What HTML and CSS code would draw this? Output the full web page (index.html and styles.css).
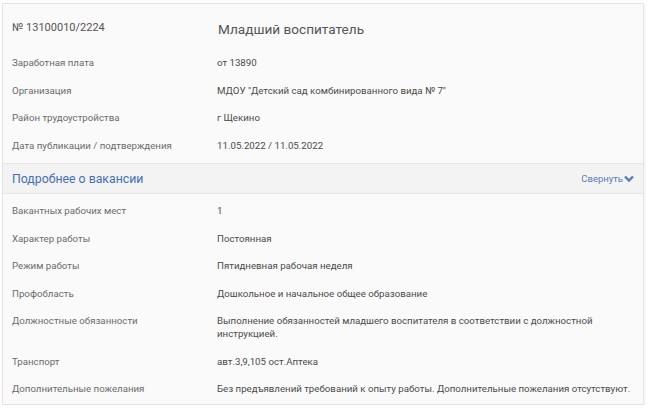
FILE: index.html
```html
<!DOCTYPE html>
<html lang="ru">
<head>
<meta charset="utf-8">
<link rel="stylesheet" href="styles.css">
</head>
<body>
<div class="panel">
  <div class="head">
    <div class="num">№ 13100010/2224</div>
    <div class="title">Младший воспитатель</div>
  </div>
  <div class="rows">
    <div class="row"><div class="lbl">Заработная плата</div><div class="val">от 13890</div></div>
    <div class="row"><div class="lbl">Организация</div><div class="val">МДОУ "Детский сад комбинированного вида № 7"</div></div>
    <div class="row"><div class="lbl">Район трудоустройства</div><div class="val">г Щекино</div></div>
    <div class="row"><div class="lbl">Дата публикации / подтверждения</div><div class="val">11.05.2022 / 11.05.2022</div></div>
  </div>
  <div class="section">
    <div class="section-title">Подробнее о вакансии</div>
    <div class="toggle">Свернуть<svg class="chev" viewBox="0 0 10 8" width="10" height="8"><path d="M1 1.5 L5 5.5 L9 1.5" fill="none" stroke="currentColor" stroke-width="2.4" stroke-linejoin="miter"/></svg></div>
  </div>
  <div class="rows rows-detail">
    <div class="row"><div class="lbl">Вакантных рабочих мест</div><div class="val">1</div></div>
    <div class="row"><div class="lbl">Характер работы</div><div class="val">Постоянная</div></div>
    <div class="row"><div class="lbl">Режим работы</div><div class="val">Пятидневная рабочая неделя</div></div>
    <div class="row"><div class="lbl">Профобласть</div><div class="val">Дошкольное и начальное общее образование</div></div>
    <div class="row"><div class="lbl">Должностные обязанности</div><div class="val">Выполнение обязанностей младшего воспитателя в соответствии с должностной инструкцией.</div></div>
    <div class="row"><div class="lbl">Транспорт</div><div class="val">авт.3,9,105 ост.Аптека</div></div>
    <div class="row"><div class="lbl">Дополнительные пожелания</div><div class="val">Без предъявлений требований к опыту работы. Дополнительные пожелания отсутствуют.</div></div>
  </div>
</div>
</body>
</html>
```
FILE: styles.css
```css
* { box-sizing: border-box; }
html, body { margin: 0; padding: 0; background: #ffffff; }
body {
  font-family: Roboto, "Noto Sans", sans-serif;
  padding: 3px 0 0 2px;
}
.panel {
  width: 642px;
  height: 402px;
  background: #fafafa;
  border: 1px solid #e4e4e4;
  box-shadow: 1px 1px 2px rgba(0,0,0,0.06);
}
.head {
  display: flex;
  align-items: center;
  height: 45px;
  padding: 5px 9px 0 9px;
}
.num {
  width: 206px;
  font-size: 11px;
  color: #555;
  margin-top: -3px;
}
.title {
  font-size: 13.6px;
  color: #555;
}
.rows { padding: 0 4px 0 9px; }
.row {
  display: flex;
  padding: 7.25px 0;
  font-size: 9.7px;
  line-height: 13px;
}
.lbl {
  width: 205px;
  flex: none;
  color: #6a6a6a;
}
.val {
  flex: 1;
  color: #4a4a4a;
}
.section {
  margin-top: 4px;
  height: 31px;
  background: #f3f3f3;
  border-top: 1px solid #e6e6e6;
  border-bottom: 1px solid #e6e6e6;
  display: flex;
  align-items: center;
  justify-content: space-between;
  padding: 0 9px 0 9px;
}
.section-title {
  font-size: 12.3px;
  color: #4470b5;
}
.toggle {
  font-size: 9.5px;
  color: #5b7bb9;
  display: flex;
  align-items: center;
  gap: 1px;
}
.chev { display: block; }
.rows-detail { padding-top: 3px; }
```
